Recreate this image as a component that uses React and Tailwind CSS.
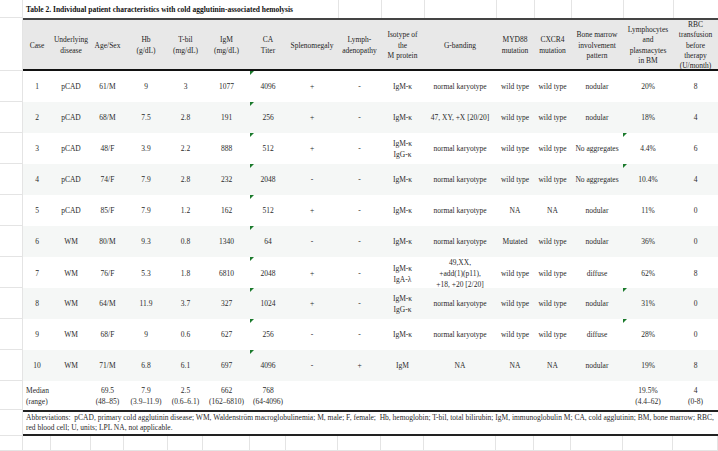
const TCOLS =
  "grid grid-cols-[28px_40px_33px_44px_35px_47px_36px_52px_43px_43px_72px_38px_37px_52px_50px_45px]";

const headers = [
  ["Case"],
  ["Underlying", "disease"],
  ["Age/Sex"],
  ["Hb", "(g/dL)"],
  ["T-bil", "(mg/dL)"],
  ["IgM", "(mg/dL)"],
  ["CA", "Titer"],
  ["Splenomegaly"],
  ["Lymph-", "adenopathy"],
  ["Isotype of", "the", "M protein"],
  ["G-banding"],
  ["MYD88", "mutation"],
  ["CXCR4", "mutation"],
  ["Bone marrow", "involvement", "pattern"],
  ["Lymphocytes", "and", "plasmacytes", "in BM"],
  ["RBC", "transfusion", "before", "therapy", "(U/month)"],
];

const rows = [
  ["1", "pCAD", "61/M", "9", "3", "1077", "4096", "+", "-", ["IgM-κ"], ["normal karyotype"], "wild type", "wild type", "nodular", "20%", "8"],
  ["2", "pCAD", "68/M", "7.5", "2.8", "191", "256", "+", "-", ["IgM-κ"], ["47, XY, +X [20/20]"], "wild type", "wild type", "nodular", "18%", "4"],
  ["3", "pCAD", "48/F", "3.9", "2.2", "888", "512", "+", "-", ["IgM-κ", "IgG-κ"], ["normal karyotype"], "wild type", "wild type", "No aggregates", "4.4%", "6"],
  ["4", "pCAD", "74/F", "7.9", "2.8", "232", "2048", "-", "-", ["IgM-κ"], ["normal karyotype"], "wild type", "wild type", "No aggregates", "10.4%", "4"],
  ["5", "pCAD", "85/F", "7.9", "1.2", "162", "512", "+", "-", ["IgM-κ"], ["normal karyotype"], "NA", "NA", "nodular", "11%", "0"],
  ["6", "WM", "80/M", "9.3", "0.8", "1340", "64", "-", "-", ["IgM-κ"], ["normal karyotype"], "Mutated", "wild type", "nodular", "36%", "0"],
  ["7", "WM", "76/F", "5.3", "1.8", "6810", "2048", "+", "-", ["IgM-κ", "IgA-λ"], ["49,XX,", "+add(1)(p11),", "+18, +20 [2/20]"], "wild type", "wild type", "diffuse", "62%", "8"],
  ["8", "WM", "64/M", "11.9", "3.7", "327", "1024", "+", "-", ["IgM-κ", "IgG-κ"], ["normal karyotype"], "wild type", "wild type", "nodular", "31%", "0"],
  ["9", "WM", "68/F", "9", "0.6", "627", "256", "-", "-", ["IgM-κ"], ["normal karyotype"], "wild type", "wild type", "diffuse", "28%", "0"],
  ["10", "WM", "71/M", "6.8", "6.1", "697", "4096", "-", "+", ["IgM"], ["NA"], "NA", "NA", "nodular", "19%", "8"],
];

const lymphMarks = [2, 3, 7, 8];

function Mark() {
  return (
    <span className="absolute left-0 top-0 h-0 w-0 border-t-[4px] border-r-[4px] border-t-[#1b7a2c] border-r-transparent" />
  );
}

function Lines({ lines }) {
  return (
    <div className="leading-[11px]">
      {lines.map((l, i) => (
        <div key={i} className="whitespace-nowrap">{l}</div>
      ))}
    </div>
  );
}

function Side({ h }) {
  return <div className={`w-[23px] shrink-0 border-r border-b border-[#e4e4e4] bg-white ${h}`} />;
}

export default function App() {
  return (
    <div className="h-[451px] w-[718px] overflow-hidden bg-white font-['Liberation_Serif',serif] text-[7.5px] text-[#2a2a2a]">
      {/* title */}
      <div className="flex h-[18px]">
        <Side h="h-[18px]" />
        <div className={`${TCOLS} flex-1`}>
          <div className="col-span-8 flex items-center pl-[3px] pt-[2px] font-bold text-[#111] whitespace-nowrap">
            Table 2. Individual patient characteristics with cold agglutinin-associated hemolysis
          </div>
          {Array.from({ length: 8 }).map((_, i) => (
            <div key={i} className="border-l border-[#e4e4e4]" />
          ))}
        </div>
      </div>

      {/* header */}
      <div className="flex h-[53px]">
        <Side h="h-[53px]" />
        <div className={`${TCOLS} flex-1 border-t-2 border-b-2 border-t-[#444] border-b-[#111] bg-[#e8e8e8] text-[#1e1e1e]`}>
          {headers.map((h, i) => (
            <div key={i} className="flex items-center justify-center text-center leading-[10.3px]">
              <div>
                {h.map((l, j) => (
                  <div key={j} className="whitespace-nowrap">{l}</div>
                ))}
              </div>
            </div>
          ))}
        </div>
      </div>

      {/* body */}
      {rows.map((r, ri) => (
        <div key={ri} className="flex h-[31px]">
          <Side h="h-[31px]" />
          <div className={`${TCOLS} flex-1 ${ri % 2 === 1 ? "bg-[#f5f7f6]" : "bg-white"}`}>
            {r.map((c, ci) => (
              <div key={ci} className="relative flex items-center justify-center text-center">
                {ci === 6 && <Mark />}
                {ci === 14 && lymphMarks.includes(ri) && <Mark />}
                {Array.isArray(c) ? <Lines lines={c} /> : <span className="whitespace-nowrap">{c}</span>}
              </div>
            ))}
          </div>
        </div>
      ))}

      {/* median */}
      <div className="flex h-[29px]">
        <Side h="h-[29px]" />
        <div className={`${TCOLS} flex-1 leading-[11px]`}>
          <div className="col-span-2 flex items-center pl-[3px]">
            <Lines lines={["Median", "(range)"]} />
          </div>
          {[
            ["69.5", "(48–85)"],
            ["7.9", "(3.9–11.9)"],
            ["2.5", "(0.6–6.1)"],
            ["662", "(162–6810)"],
            ["768", "(64-4096)"],
          ].map((m, i) => (
            <div key={i} className="flex items-center justify-center text-center">
              <Lines lines={m} />
            </div>
          ))}
          <div className="col-span-7" />
          <div className="flex items-center justify-center text-center">
            <Lines lines={["19.5%", "(4.4–62)"]} />
          </div>
          <div className="flex items-center justify-center text-center">
            <Lines lines={["4", "(0-8)"]} />
          </div>
        </div>
      </div>

      {/* abbreviations */}
      <div className="flex h-[26px]">
        <Side h="h-[26px]" />
        <div className="flex flex-1 items-center border-t-2 border-b-2 border-[#222] pl-[3px] leading-[10.5px] whitespace-pre">
          <div>
            {"Abbreviations:  pCAD, primary cold agglutinin disease; WM, Waldenström macroglobulinemia; M, male; F, female;  Hb, hemoglobin; T-bil, total bilirubin; IgM, immunoglobulin M; CA, cold agglutinin; BM, bone marrow; RBC,"}
            <br />
            {"red blood cell; U, units; LPL NA, not applicable."}
          </div>
        </div>
      </div>

      {/* trailing grid */}
      <div className="flex h-[15px]">
        <Side h="h-[15px]" />
        <div className={`${TCOLS} flex-1`}>
          {headers.map((_, i) => (
            <div key={i} className="border-r border-b border-[#e4e4e4]" />
          ))}
        </div>
      </div>
    </div>
  );
}
